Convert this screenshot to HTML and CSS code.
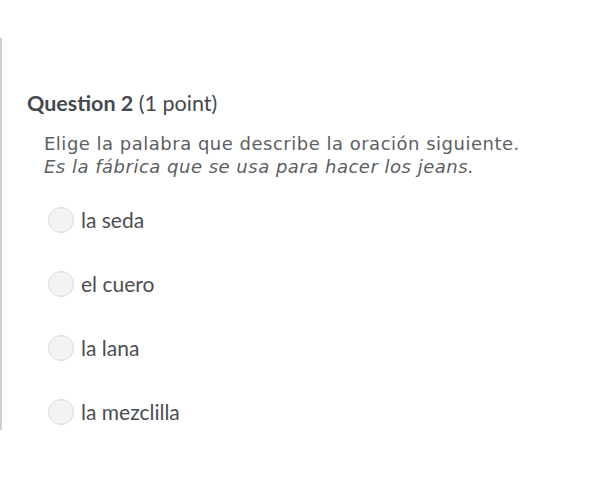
FILE: index.html
```html
<!DOCTYPE html>
<html lang="en">
<head>
    <meta charset="UTF-8">
    <title>Question 2</title>
    <link rel="stylesheet" href="styles.css">
</head>
<body>
    <div class="quiz-panel">
        <h2 class="question-title"><strong>Question 2</strong> (1 point)</h2>

        <p class="question-prompt">
            Elige la palabra que describe la oración siguiente.<br>
            <em>Es la fábrica que se usa para hacer los jeans.</em>
        </p>

        <div class="answer-list">
            <label class="answer">
                <input type="radio" name="q2" class="answer-radio">
                <span class="answer-text">la seda</span>
            </label>
            <label class="answer">
                <input type="radio" name="q2" class="answer-radio">
                <span class="answer-text">el cuero</span>
            </label>
            <label class="answer">
                <input type="radio" name="q2" class="answer-radio">
                <span class="answer-text">la lana</span>
            </label>
            <label class="answer">
                <input type="radio" name="q2" class="answer-radio">
                <span class="answer-text">la mezclilla</span>
            </label>
        </div>
    </div>
</body>
</html>
```

FILE: styles.css
```css
* {
    margin: 0;
    padding: 0;
    box-sizing: border-box;
}

body {
    background: #fff;
    font-family: 'Lato', 'Liberation Sans', sans-serif;
    color: #494c50;
    padding-top: 38px;
}

.quiz-panel {
    border-left: 2px solid #cfcfcf;
    height: 392px;
    padding: 52px 0 0 25px;
}

.question-title {
    font-size: 21.5px;
    line-height: 26px;
    font-weight: 400;
    color: #45484d;
}

.question-title strong {
    font-weight: 700;
}

.question-prompt {
    margin: 16px 0 0 17px;
    font-family: 'DejaVu Sans', sans-serif;
    font-size: 18px;
    letter-spacing: 0.5px;
    line-height: 23px;
    color: #5b5e63;
}

.question-prompt em {
    font-style: oblique;
}

.answer-list {
    display: flex;
    flex-direction: column;
    gap: 38px;
    margin: 29px 0 0 21px;
}

.answer {
    display: flex;
    align-items: center;
    gap: 7px;
    cursor: pointer;
}

.answer-radio {
    appearance: none;
    -webkit-appearance: none;
    width: 26px;
    height: 26px;
    border-radius: 50%;
    border: 1px solid #d8dadd;
    background: #f2f3f5;
    flex-shrink: 0;
}

.answer-text {
    font-size: 21px;
    line-height: 26px;
    color: #4a4d52;
}
```
